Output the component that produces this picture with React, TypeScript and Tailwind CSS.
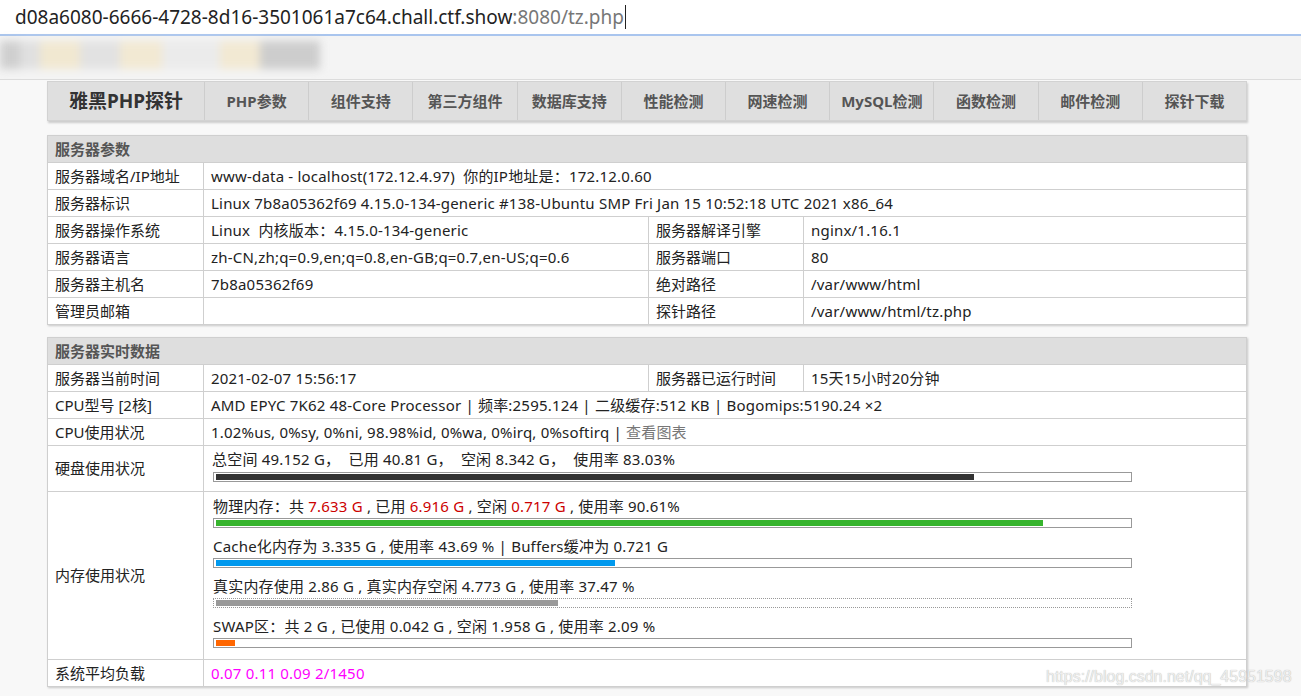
import React from 'react';

const sans = "font-['Noto_Sans','Noto_Sans_CJK_SC',sans-serif]";

const navItems = ['PHP参数', '组件支持', '第三方组件', '数据库支持', '性能检测', '网速检测', 'MySQL检测', '函数检测', '邮件检测', '探针下载'];

const cell = 'border border-[#cfcfcf] pl-[7px] pr-2 h-[27px] py-0 text-[15px] text-[#222] whitespace-nowrap';
const val = `${cell} tracking-[0.2px]`;

function Bar({ pct, color, dotted = false }: { pct: number; color: string; dotted?: boolean }) {
  return (
    <div className={`w-[919px] h-[10px] bg-white px-[2px] py-[1px] border border-[#999] ${dotted ? 'border-dotted' : 'border-solid'}`}>
      <div className={`h-full ${color}`} style={{ width: `${pct}%` }} />
    </div>
  );
}

function SectionHeader({ title }: { title: string }) {
  return (
    <tr>
      <td colSpan={4} className="border border-[#cfcfcf] bg-[#dedede] pl-[7px] h-[27px] py-0 text-[15px] font-bold text-[#555]">
        {title}
      </td>
    </tr>
  );
}

function Cols() {
  return (
    <colgroup>
      <col className="w-[156px]" />
      <col className="w-[445px]" />
      <col className="w-[155px]" />
      <col />
    </colgroup>
  );
}

export default function App() {
  return (
    <div className={`relative w-[1301px] h-[696px] overflow-hidden bg-[#f8f8f8] ${sans}`}>
      {/* address bar */}
      <div className="h-[34px] bg-white flex items-center pl-[15px] text-[19px] text-[#222]">
        <span>d08a6080-6666-4728-8d16-3501061a7c64.chall.ctf.show</span>
        <span className="text-[#777]">:8080/tz.php</span>
        <span className="w-px h-[24px] bg-[#222] ml-[1px]" />
      </div>
      <div className="h-[2px] bg-[#a9c5ee]" />
      {/* blurred bookmarks */}
      <div className="h-[44px] bg-[#f4f4f4] border-b border-[#dcdcdc] pt-[5px]">
        <div className="flex h-[28px] w-[320px] blur-[4px]">
          <div className="w-[20px] bg-[#cfcfcf]" />
          <div className="w-[20px] bg-[#e0e0e0]" />
          <div className="w-[40px] bg-[#f1e8d1]" />
          <div className="w-[40px] bg-[#e2e2e2]" />
          <div className="w-[42px] bg-[#f2e9d3]" />
          <div className="w-[58px] bg-[#ebebeb]" />
          <div className="w-[40px] bg-[#f2e9d3]" />
          <div className="w-[60px] bg-[#cdcdcd]" />
        </div>
      </div>

      <div className="ml-[47px] w-[1200px] pt-[1px]">
        {/* nav */}
        <div className="flex h-[40px] bg-[#dfdfdf] border border-[#d2d2d2] shadow-[1px_2px_2px_rgba(0,0,0,0.18)]">
          <div className="w-[156px] flex items-center justify-center text-[19px] font-bold text-[#333]">雅黑PHP探针</div>
          {navItems.map((n) => (
            <div key={n} className="flex-1 flex items-center justify-center border-l border-[#cdcdcd] text-[15px] font-bold text-[#555]">
              {n}
            </div>
          ))}
        </div>

        {/* server params */}
        <table className="mt-[14px] w-full border-collapse table-fixed bg-white shadow-[1px_1px_2px_rgba(0,0,0,0.2)]">
          <Cols />
          <tbody>
            <SectionHeader title="服务器参数" />
            <tr>
              <td className={cell}>服务器域名/IP地址</td>
              <td className={val} colSpan={3}>www-data - localhost(172.12.4.97)&nbsp; 你的IP地址是：172.12.0.60</td>
            </tr>
            <tr>
              <td className={cell}>服务器标识</td>
              <td className={val} colSpan={3}>Linux 7b8a05362f69 4.15.0-134-generic #138-Ubuntu SMP Fri Jan 15 10:52:18 UTC 2021 x86_64</td>
            </tr>
            <tr>
              <td className={cell}>服务器操作系统</td>
              <td className={val}>Linux&nbsp; 内核版本：4.15.0-134-generic</td>
              <td className={cell}>服务器解译引擎</td>
              <td className={val}>nginx/1.16.1</td>
            </tr>
            <tr>
              <td className={cell}>服务器语言</td>
              <td className={val}>zh-CN,zh;q=0.9,en;q=0.8,en-GB;q=0.7,en-US;q=0.6</td>
              <td className={cell}>服务器端口</td>
              <td className={val}>80</td>
            </tr>
            <tr>
              <td className={cell}>服务器主机名</td>
              <td className={val}>7b8a05362f69</td>
              <td className={cell}>绝对路径</td>
              <td className={val}>/var/www/html</td>
            </tr>
            <tr>
              <td className={cell}>管理员邮箱</td>
              <td className={val}></td>
              <td className={cell}>探针路径</td>
              <td className={val}>/var/www/html/tz.php</td>
            </tr>
          </tbody>
        </table>

        {/* realtime data */}
        <table className="mt-[12px] w-full border-collapse table-fixed bg-white shadow-[1px_1px_2px_rgba(0,0,0,0.2)]">
          <Cols />
          <tbody>
            <SectionHeader title="服务器实时数据" />
            <tr>
              <td className={cell}>服务器当前时间</td>
              <td className={val}>2021-02-07 15:56:17</td>
              <td className={cell}>服务器已运行时间</td>
              <td className={val}>15天15小时20分钟</td>
            </tr>
            <tr>
              <td className={cell}>CPU型号 [2核]</td>
              <td className={val} colSpan={3}>AMD EPYC 7K62 48-Core Processor | 频率:2595.124 | 二级缓存:512 KB | Bogomips:5190.24 ×2</td>
            </tr>
            <tr>
              <td className={cell}>CPU使用状况</td>
              <td className={val} colSpan={3}>
                1.02%us, 0%sy, 0%ni, 98.98%id, 0%wa, 0%irq, 0%softirq | <span className="text-[#777]">查看图表</span>
              </td>
            </tr>
            <tr>
              <td className={`${cell} !h-[46px]`}>硬盘使用状况</td>
              <td className="border border-[#cfcfcf] px-2 pt-[3px] h-[46px] align-top text-[15px] text-[#222] tracking-[0.2px]" colSpan={3}>
                <div className="h-[20px] leading-[20px] whitespace-nowrap">总空间 49.152 G，&nbsp; 已用 40.81 G，&nbsp; 空闲 8.342 G，&nbsp; 使用率 83.03%</div>
                <div className="mt-[3px] ml-[1px]">
                  <Bar pct={83.03} color="bg-[#333]" />
                </div>
              </td>
            </tr>
            <tr>
              <td className={`${cell} !h-[168px]`}>内存使用状况</td>
              <td className="border border-[#cfcfcf] px-2 pt-[4px] h-[168px] align-top text-[15px] text-[#222] tracking-[0.2px]" colSpan={3}>
                <div className="flex flex-col gap-[8px] ml-[1px]">
                  <div>
                    <div className="h-[20px] leading-[20px] whitespace-nowrap">
                      物理内存：共 <span className="text-[#cc0000]">7.633 G</span> , 已用 <span className="text-[#cc0000]">6.916 G</span> , 空闲 <span className="text-[#cc0000]">0.717 G</span> , 使用率 90.61%
                    </div>
                    <div className="mt-[2px]"><Bar pct={90.61} color="bg-[#36b42d]" /></div>
                  </div>
                  <div>
                    <div className="h-[20px] leading-[20px] whitespace-nowrap">Cache化内存为 3.335 G , 使用率 43.69 % | Buffers缓冲为 0.721 G</div>
                    <div className="mt-[2px]"><Bar pct={43.69} color="bg-[#0099ee]" /></div>
                  </div>
                  <div>
                    <div className="h-[20px] leading-[20px] whitespace-nowrap">真实内存使用 2.86 G , 真实内存空闲 4.773 G , 使用率 37.47 %</div>
                    <div className="mt-[2px]"><Bar pct={37.47} color="bg-[#999]" dotted /></div>
                  </div>
                  <div>
                    <div className="h-[20px] leading-[20px] whitespace-nowrap">SWAP区：共 2 G , 已使用 0.042 G , 空闲 1.958 G , 使用率 2.09 %</div>
                    <div className="mt-[2px]"><Bar pct={2.09} color="bg-[#ff6600]" /></div>
                  </div>
                </div>
              </td>
            </tr>
            <tr>
              <td className={cell}>系统平均负载</td>
              <td className={val} colSpan={3}>
                <span className="text-[#ff00ff]">0.07 0.11 0.09 2/1450</span>
              </td>
            </tr>
          </tbody>
        </table>
      </div>

      {/* watermark */}
      <div className="absolute left-[1046px] top-[665px] text-[16px] text-[#eeeeee] font-['Liberation_Sans',sans-serif] [text-shadow:0_0_1px_#aaa]">
        https://blog.csdn.net/qq_45951598
      </div>
    </div>
  );
}
